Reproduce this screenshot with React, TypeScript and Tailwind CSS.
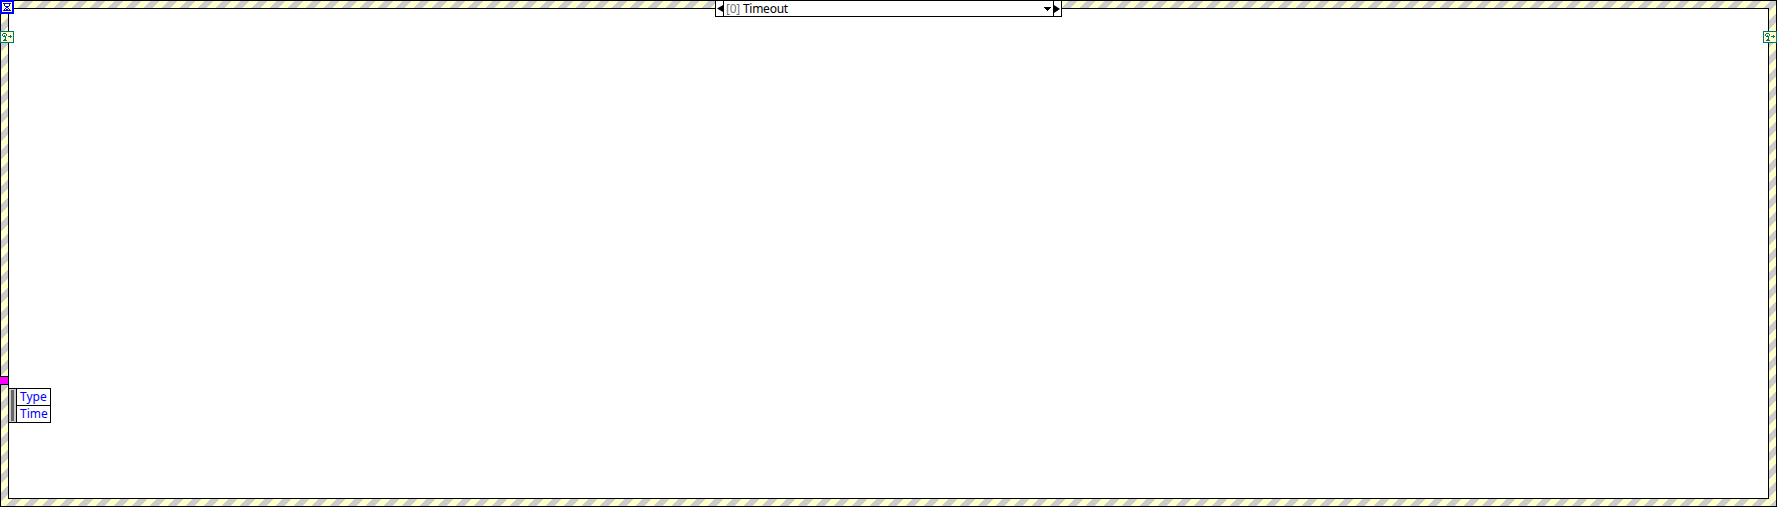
const frame =
  "bg-[linear-gradient(135deg,#cccccc_25%,#ffffcc_25%,#ffffcc_50%,#cccccc_50%,#cccccc_75%,#ffffcc_75%)] bg-[length:18px_18px] bg-[position:5px_0px]";

function Hourglass() {
  return (
    <svg className="block h-[14px] w-[14px]" viewBox="0 0 14 14" shapeRendering="crispEdges">
      <path d="M0 0h14v14H0z" fill="#0000ff" />
      <path d="M2 2h10v10H2z" fill="#ffffcc" />
      <path
        d="M3 3h8v1H3zM4 4h1v2H4zM9 4h1v2H9zM5 6h1v1H5zM8 6h1v1H8zM6 6h2v2H6zM5 8h1v1H5zM8 8h1v1H8zM4 9h1v1H4zM9 9h1v1H9zM6 9h2v1H6zM3 10h8v1H3z"
        fill="#0000ff"
      />
    </svg>
  );
}

function DynamicTerminal() {
  return (
    <svg className="block h-3 w-[14px]" viewBox="0 0 14 12" shapeRendering="crispEdges">
      <path d="M.5.5h13v11H.5z" fill="#ffffcc" stroke="#007373" />
      <path
        d="M3 2h3v1H3zM2 3h1v2H2zM6 3h1v2H6zM4 4h1v1H4zM3 5h3v1H3zM5 6h1v4H5zM4 8h1v1H4zM3 9h4v1H3zM8 5h4v1H8zM10 4h1v3h-1z"
        fill="#007373"
      />
    </svg>
  );
}

export default function App() {
  return (
    <div
      className={`relative flex h-[507px] w-[1777px] border border-black p-[7px] font-["Noto_Sans",sans-serif] text-xs text-black ${frame}`}
    >
      <main className="flex-1 border border-black bg-white pt-[379px]">
        <div className="flex h-[35px] w-[42px] border border-l-0 border-black bg-white">
          <div className="flex w-2 border-r border-black bg-[#cccccc] py-px pl-[2px]">
            <div className="w-[3px] bg-[#666666]" />
          </div>
          <div className="flex-1 text-[#0000ff]">
            <div className="h-[17px] border-b border-black pl-[3px] leading-4">Type</div>
            <div className="h-4 pl-[3px] leading-4">Time</div>
          </div>
        </div>
      </main>

      <header className="absolute -top-px left-[714px] flex h-[17px] w-[347px] border border-black bg-white">
        <button className="flex w-2 items-center justify-center border-r border-black" aria-label="Previous case">
          <svg className="h-[7px] w-[6px]" viewBox="0 0 6 7"><path d="M6 0v7L0 3.5z" /></svg>
        </button>
        <div className="flex flex-1 items-center justify-between pl-[2px] pr-[2px]">
          <span className="leading-[15px] tracking-[-0.25px]">
            <span className="text-[#767676]">[0]</span> Timeout
          </span>
          <svg className="h-1 w-[7px]" viewBox="0 0 7 4" shapeRendering="crispEdges">
            <path d="M0 0h7v1H0zM1 1h5v1H1zM2 2h3v1H2zM3 3h1v1H3z" />
          </svg>
        </div>
        <button className="flex w-2 items-center border-l border-black" aria-label="Next case">
          <svg className="h-2 w-[6px]" viewBox="0 0 6 8"><path d="M0 0v8l6-4z" /></svg>
        </button>
      </header>

      <div className="absolute -left-px -top-px"><Hourglass /></div>
      <div className="absolute -left-px top-[30px]"><DynamicTerminal /></div>
      <div className="absolute left-[1762px] top-[30px]"><DynamicTerminal /></div>
      <div className="absolute -left-px top-[375px] h-[9px] w-[9px] border border-l-0 border-black bg-[#ff00ff]" />
    </div>
  );
}
